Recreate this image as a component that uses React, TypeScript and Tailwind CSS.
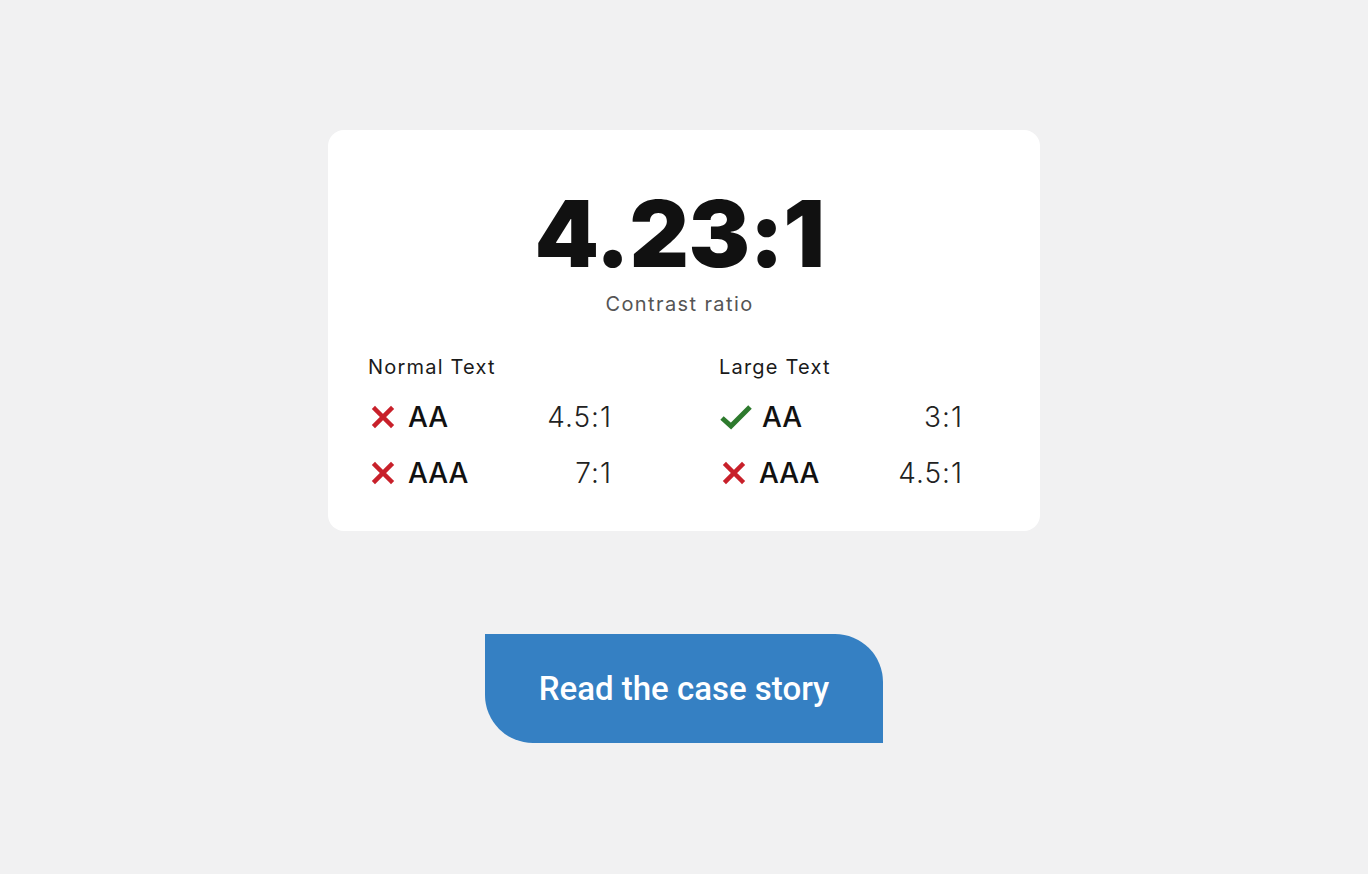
import React from "react";

type Check = { level: string; ratio: string; pass: boolean };

const groups: { title: string; checks: Check[] }[] = [
  {
    title: "Normal Text",
    checks: [
      { level: "AA", ratio: "4.5:1", pass: false },
      { level: "AAA", ratio: "7:1", pass: false },
    ],
  },
  {
    title: "Large Text",
    checks: [
      { level: "AA", ratio: "3:1", pass: true },
      { level: "AAA", ratio: "4.5:1", pass: false },
    ],
  },
];

function FailIcon() {
  return (
    <svg width="24" height="24" viewBox="0 0 24 24" className="shrink-0">
      <path d="M4 4L20 20M20 4L4 20" stroke="#c8202a" strokeWidth="4.5" strokeLinecap="square" />
    </svg>
  );
}

function PassIcon() {
  return (
    <svg width="32" height="26" viewBox="0 0 32 26" className="shrink-0 -ml-[2px] -mr-[3px]">
      <path d="M2 14L11 22L30 3" fill="none" stroke="#2d7a2d" strokeWidth="5" strokeLinejoin="miter" />
    </svg>
  );
}

export default function App() {
  return (
    <div className="min-h-[874px] bg-[#f1f1f2] flex flex-col items-center pt-[130px] font-['Inter',sans-serif]">
      <div className="w-[712px] bg-white rounded-2xl px-10 pt-[58px] pb-[45px] flex flex-col items-center">
        {/* Ratio header sits a touch left of centre */}
        <div className="flex flex-col items-center pr-[9px]">
          <div className="text-[92px] leading-none font-black text-[#111] tracking-[-0.5px]">4.23:1</div>
          <div className="mt-[14px] text-[20px] leading-none text-[#555] tracking-[1.4px]">Contrast ratio</div>
        </div>

        <div className="mt-[43px] w-full grid grid-cols-[281px_281px] gap-x-[70px]">
          {groups.map((g) => (
            <div key={g.title} className="w-[244px]">
              <div className="text-[20px] leading-none text-[#1a1a1a] tracking-[1.2px]">{g.title}</div>
              <div className="mt-[27px] flex flex-col gap-[30px]">
                {g.checks.map((c) => (
                  <div key={c.level} className="flex items-center justify-between h-[26px]">
                    <div className="flex items-center gap-[13px] pl-[3px]">
                      {c.pass ? <PassIcon /> : <FailIcon />}
                      <span className="text-[28px] leading-none font-medium text-[#111]">{c.level}</span>
                    </div>
                    <span className="text-[28px] leading-none font-light text-[#222] tracking-[1px]">{c.ratio}</span>
                  </div>
                ))}
              </div>
            </div>
          ))}
        </div>
      </div>

      <button className="mt-[103px] w-[398px] h-[109px] bg-[#3580c3] text-white rounded-tr-[48px] rounded-bl-[48px] font-['Roboto',sans-serif] font-medium text-[33px] leading-none">
        Read the case story
      </button>
    </div>
  );
}
